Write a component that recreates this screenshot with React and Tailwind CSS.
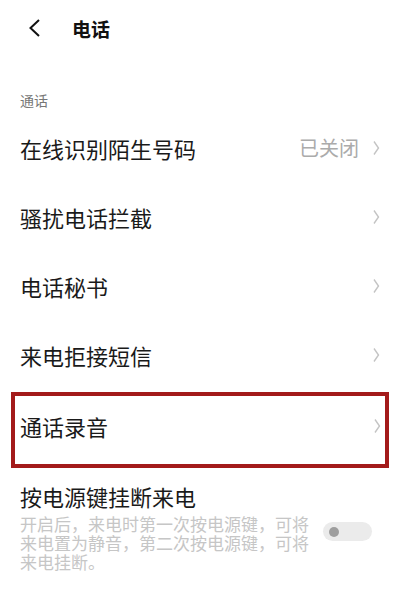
import React from 'react';

const font = { fontFamily: '"Noto Sans CJK SC", "Noto Sans", sans-serif' };

function Chevron() {
  return (
    <svg width="8" height="16" viewBox="0 0 8 16" className="shrink-0">
      <path d="M2 1.5 L6.5 8 L2 14.5" fill="none" stroke="#c4c4c4" strokeWidth="1.4" />
    </svg>
  );
}

function Row({ label, value, boxed }) {
  return (
    <div
      className={
        boxed
          ? 'flex items-center justify-between h-[76px] mx-[11px] pl-[5px] pr-[4px] pb-[8px] border-[4px] border-[#a31a1a]'
          : 'flex items-center justify-between h-[69px] pl-[20px] pr-[20px]'
      }
    >
      <span className="text-[22px] text-[#1a1a1a] leading-none">{label}</span>
      <div className="flex items-center gap-[13px]">
        {value && <span className="text-[20px] text-[#ababab] leading-none">{value}</span>}
        <Chevron />
      </div>
    </div>
  );
}

export default function App() {
  return (
    <div className="w-[400px] h-[609px] bg-white overflow-hidden" style={font}>
      {/* Header */}
      <div className="flex items-center h-[56px] pl-[28px]">
        <svg width="14" height="20" viewBox="0 0 14 20">
          <path d="M11 2 L2.5 10 L11 18" fill="none" stroke="#111" strokeWidth="2" />
        </svg>
        <span className="ml-[30px] text-[19px] font-bold text-[#111] leading-none">电话</span>
      </div>

      <div className="pl-[20px] pt-[37px] pb-[6px] text-[14px] text-[#777] leading-none">通话</div>

      <div className="flex flex-col">
        <Row label="在线识别陌生号码" value="已关闭" />
        <Row label="骚扰电话拦截" />
        <Row label="电话秘书" />
        <Row label="来电拒接短信" />
        <div className="pt-[3px]">
          <Row label="通话录音" boxed />
        </div>

        {/* power key row */}
        <div className="pl-[20px] pr-[28px] pt-[17px]">
          <div className="text-[22px] text-[#1a1a1a] leading-none">按电源键挂断来电</div>
          <div className="flex items-start justify-between mt-[7px]">
            <p className="w-[300px] text-[17px] leading-[19px] text-[#c6c6c6]">
              开启后，来电时第一次按电源键，可将来电置为静音，第二次按电源键，可将来电挂断。
            </p>
            <div className="mt-[8px] w-[49px] h-[19px] rounded-full bg-[#ebebeb] flex items-center pl-[6px]">
              <div className="w-[10px] h-[10px] rounded-full bg-[#9e9e9e]" />
            </div>
          </div>
        </div>
      </div>
    </div>
  );
}
